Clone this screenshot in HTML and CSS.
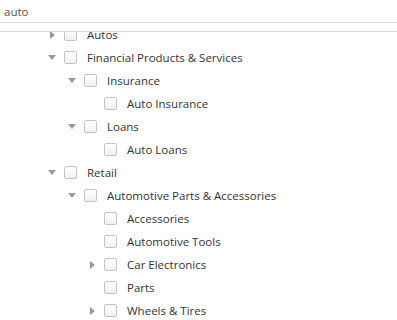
FILE: index.html
```html
<!DOCTYPE html>
<html lang="en">
  <head>
    <meta charset="UTF-8" />
    <meta name="viewport" content="width=device-width, initial-scale=1.0" />
    <title>Category Filter</title>
    <link rel="stylesheet" href="styles.css">
  </head>
  <body>
    <div class="search">
      <input type="text" class="search-input" value="auto" />
    </div>
    <div class="tree" id="tree">
      <ul class="tree-list">
        <li class="node level-0"><span class="toggle closed"></span><span class="check"></span><span class="label">Autos</span></li>
        <li class="node level-0"><span class="toggle open"></span><span class="check"></span><span class="label">Financial Products &amp; Services</span></li>
        <li class="node level-1"><span class="toggle open"></span><span class="check"></span><span class="label">Insurance</span></li>
        <li class="node level-2"><span class="toggle"></span><span class="check"></span><span class="label">Auto Insurance</span></li>
        <li class="node level-1"><span class="toggle open"></span><span class="check"></span><span class="label">Loans</span></li>
        <li class="node level-2"><span class="toggle"></span><span class="check"></span><span class="label">Auto Loans</span></li>
        <li class="node level-0"><span class="toggle open"></span><span class="check"></span><span class="label">Retail</span></li>
        <li class="node level-1"><span class="toggle open"></span><span class="check"></span><span class="label">Automotive Parts &amp; Accessories</span></li>
        <li class="node level-2"><span class="toggle"></span><span class="check"></span><span class="label">Accessories</span></li>
        <li class="node level-2"><span class="toggle"></span><span class="check"></span><span class="label">Automotive Tools</span></li>
        <li class="node level-2"><span class="toggle closed"></span><span class="check"></span><span class="label">Car Electronics</span></li>
        <li class="node level-2"><span class="toggle"></span><span class="check"></span><span class="label">Parts</span></li>
        <li class="node level-2"><span class="toggle closed"></span><span class="check"></span><span class="label">Wheels &amp; Tires</span></li>
      </ul>
    </div>
    <script>
      (() => {
        document.getElementById("tree").scrollTop = 9;
      })();
    </script>
  </body>
</html>
```

FILE: styles.css
```css
body {
  font-family: "Open Sans", Arial, sans-serif;
  font-size: 11.5px;
  color: #333;
  background-color: #fff;
  margin: 0;
  padding: 0;
}

.search {
  border-bottom: 1px solid #ddd;
  height: 22px;
}

.search-input {
  font-family: "Open Sans", Arial, sans-serif;
  font-size: 11.5px;
  color: #555;
  border: none;
  outline: none;
  width: 100%;
  height: 22px;
  padding: 0 4px;
  margin: 0;
  box-sizing: border-box;
  background: transparent;
}

.tree {
  margin-top: 8px;
  border-top: 1px solid #ddd;
  height: 288px;
  overflow: hidden;
}

.tree-list {
  list-style: none;
  margin: 0;
  padding: 0;
}

.node {
  display: flex;
  align-items: center;
  height: 23px;
  padding-left: 44px;
}

.level-1 {
  padding-left: 64px;
}

.level-2 {
  padding-left: 84px;
}

.toggle {
  width: 16px;
  height: 16px;
  display: flex;
  align-items: center;
  justify-content: center;
  margin-right: 4px;
}

.toggle.open::before {
  content: "";
  border-left: 4px solid transparent;
  border-right: 4px solid transparent;
  border-top: 5px solid #999;
}

.toggle.closed::before {
  content: "";
  border-top: 4px solid transparent;
  border-bottom: 4px solid transparent;
  border-left: 5px solid #999;
}

.check {
  width: 11px;
  height: 11px;
  border: 1px solid #c4c4c4;
  border-radius: 2px;
  background: linear-gradient(#fff, #f1f1f1);
  box-shadow: inset 0 -1px 0 #eee;
  margin-right: 10px;
}

.label {
  white-space: nowrap;
}
```
